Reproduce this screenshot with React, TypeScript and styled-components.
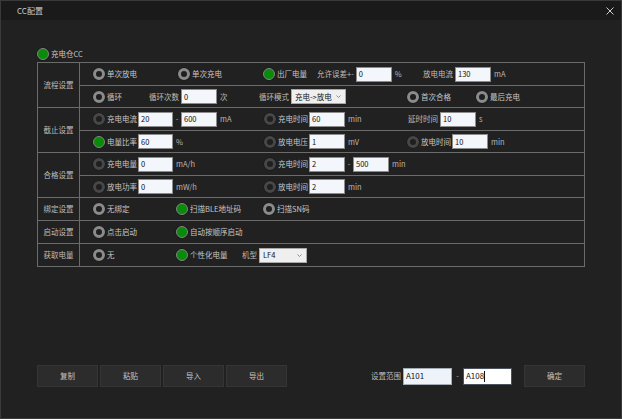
import React from 'react';
import styled, { createGlobalStyle } from 'styled-components';

type RadioState = 'on' | 'off' | 'dis';

const GlobalStyle = createGlobalStyle`
  html, body { margin: 0; padding: 0; background: #202020; }
  body { font-family: "Noto Sans CJK SC", "Noto Sans", sans-serif; }
  * { box-sizing: border-box; }
`;

const Window = styled.div`
  width: 622px;
  height: 419px;
  border: 1px solid #3a3a3a;
  background: #212121;
  display: flex;
  flex-direction: column;
  color: #c4c4c4;
  font-size: 7.5px;
  line-height: 1;
`;

const TitleBar = styled.div`
  height: 19px;
  flex: none;
  background: #1a1a1a;
  display: flex;
  align-items: center;
  justify-content: space-between;
  padding: 0 7px 0 16px;
  font-size: 8px;
  color: #cacaca;
`;

const Body = styled.div`
  flex: 1;
  display: flex;
  flex-direction: column;
  padding: 27px 36px 31px 36px;
`;

const TopRow = styled.div`
  height: 13px;
  margin-bottom: 2px;
  display: flex;
  align-items: center;
`;

const Table = styled.div`
  border: 1px solid #6b6b6b;
`;

const Group = styled.div`
  display: grid;
  grid-template-columns: 42px 1fr;
  & + & {
    border-top: 1px solid #6b6b6b;
  }
`;

const GroupLabel = styled.div`
  border-right: 1px solid #6b6b6b;
  display: flex;
  align-items: center;
  justify-content: center;
  color: #bdbdbd;
`;

const SubRow = styled.div`
  height: 22px;
  display: flex;
  align-items: center;
  padding-left: 13px;
  & + & {
    border-top: 1px solid #6b6b6b;
  }
`;

const Cell = styled.div<{ $w?: number }>`
  flex: ${p => (p.$w ? 'none' : '1')};
  width: ${p => (p.$w ? `${p.$w}px` : 'auto')};
  display: flex;
  align-items: center;
  white-space: nowrap;
`;

const Radio = styled.span<{ $state: RadioState }>`
  width: 12px;
  height: 12px;
  flex: none;
  border-radius: 50%;
  margin-right: 2px;
  border: ${p => (p.$state === 'on' ? '1.5px solid' : '3px solid')};
  border-color: ${p => (p.$state === 'on' ? '#858585' : p.$state === 'dis' ? '#474747' : '#8b8b8b')};
  background: ${p => (p.$state === 'on' ? '#0a8a0a' : '#1f1f1f')};
  box-shadow: 0 0 0 0.5px #151515;
`;

const Text = styled.span`
  color: #c6c6c6;
  margin-right: 1px;
`;

const Label = styled.span`
  color: #bebebe;
  margin-right: 2px;
`;

const Unit = styled.span`
  color: #b8b8b8;
  margin-left: 3px;
`;

const Dash = styled.span`
  width: 8px;
  text-align: center;
  color: #b8b8b8;
`;

const Box = styled.div<{ $w?: number }>`
  width: ${p => p.$w ?? 36}px;
  height: 15px;
  background: #f3f6fb;
  border: 1px solid #8c8c8c;
  color: #111;
  padding-left: 2px;
  display: flex;
  align-items: center;
`;

const Select = styled.div<{ $w: number }>`
  width: ${p => p.$w}px;
  height: 15px;
  background: #efefef;
  border: 1px solid #a9a9a9;
  color: #111;
  padding: 0 4px 0 3px;
  display: flex;
  align-items: center;
  justify-content: space-between;
`;

const Footer = styled.div`
  margin-top: auto;
  display: flex;
  align-items: center;
  justify-content: space-between;
`;

const ButtonGroup = styled.div`
  display: flex;
  gap: 2px;
`;

const Button = styled.div`
  width: 61px;
  height: 22px;
  background: #2c2c2c;
  border: 1px solid #353535;
  color: #c4c4c4;
  display: flex;
  align-items: center;
  justify-content: center;
`;

const RangeGroup = styled.div`
  display: flex;
  align-items: center;
`;

const RangeBox = styled.div<{ $focus?: boolean }>`
  width: 49px;
  height: 17px;
  background: ${p => (p.$focus ? '#ffffff' : '#eef3fa')};
  border: 1px solid ${p => (p.$focus ? '#4a525c' : '#a3abb5')};
  color: #111;
  font-size: 8px;
  padding-left: 2px;
  display: flex;
  align-items: center;
`;

const Caret = styled.span`
  width: 1px;
  height: 11px;
  background: #111;
`;

const RangeDash = styled.span`
  width: 11px;
  text-align: center;
  color: #b5b5b5;
`;

const OkButton = styled(Button)`
  margin-left: 12px;
`;

function Close() {
  return (
    <svg width="8" height="8" viewBox="0 0 8 8">
      <path d="M0.5 0.5 L7.5 7.5 M7.5 0.5 L0.5 7.5" stroke="#cfcfcf" strokeWidth="1" />
    </svg>
  );
}

function Chevron() {
  return (
    <svg width="5" height="3" viewBox="0 0 5 3">
      <path d="M0.5 0.5 L2.5 2.5 L4.5 0.5" stroke="#777" strokeWidth="0.8" fill="none" />
    </svg>
  );
}

function Choice({ state = 'off', children }: { state?: RadioState; children: React.ReactNode }) {
  return (
    <>
      <Radio $state={state} />
      <Text>{children}</Text>
    </>
  );
}

export default function App() {
  return (
    <>
      <GlobalStyle />
      <Window>
        <TitleBar>
          <span>CC配置</span>
          <Close />
        </TitleBar>
        <Body>
          <TopRow>
            <Choice state="on">充电仓CC</Choice>
          </TopRow>
          <Table>
            <Group>
              <GroupLabel>流程设置</GroupLabel>
              <div>
                <SubRow>
                  <Cell $w={85}><Choice>单次放电</Choice></Cell>
                  <Cell $w={85}><Choice>单次充电</Choice></Cell>
                  <Cell $w={54}><Choice state="on">出厂电量</Choice></Cell>
                  <Cell $w={106}>
                    <Label>允许误差+-</Label>
                    <Box>0</Box>
                    <Unit>%</Unit>
                  </Cell>
                  <Cell>
                    <Label>放电电流</Label>
                    <Box>130</Box>
                    <Unit>mA</Unit>
                  </Cell>
                </SubRow>
                <SubRow>
                  <Cell $w={56}><Choice>循环</Choice></Cell>
                  <Cell $w={110}>
                    <Label>循环次数</Label>
                    <Box>0</Box>
                    <Unit>次</Unit>
                  </Cell>
                  <Cell $w={148}>
                    <Label>循环模式</Label>
                    <Select $w={55}>
                      <span>充电-&gt;放电</span>
                      <Chevron />
                    </Select>
                  </Cell>
                  <Cell $w={69}><Choice>首次合格</Choice></Cell>
                  <Cell><Choice>最后充电</Choice></Cell>
                </SubRow>
              </div>
            </Group>
            <Group>
              <GroupLabel>截止设置</GroupLabel>
              <div>
                <SubRow>
                  <Cell $w={171}>
                    <Choice state="dis">充电电流</Choice>
                    <Box $w={35}>20</Box>
                    <Dash>-</Dash>
                    <Box>600</Box>
                    <Unit>mA</Unit>
                  </Cell>
                  <Cell $w={144}>
                    <Choice state="dis">充电时间</Choice>
                    <Box>60</Box>
                    <Unit>min</Unit>
                  </Cell>
                  <Cell>
                    <Label>延时时间</Label>
                    <Box>10</Box>
                    <Unit>s</Unit>
                  </Cell>
                </SubRow>
                <SubRow>
                  <Cell $w={171}>
                    <Choice state="on">电量比率</Choice>
                    <Box $w={35}>60</Box>
                    <Unit>%</Unit>
                  </Cell>
                  <Cell $w={143}>
                    <Choice state="dis">放电电压</Choice>
                    <Box>1</Box>
                    <Unit>mV</Unit>
                  </Cell>
                  <Cell>
                    <Choice state="dis">放电时间</Choice>
                    <Box>10</Box>
                    <Unit>min</Unit>
                  </Cell>
                </SubRow>
              </div>
            </Group>
            <Group>
              <GroupLabel>合格设置</GroupLabel>
              <div>
                <SubRow>
                  <Cell $w={171}>
                    <Choice state="dis">充电电量</Choice>
                    <Box $w={35}>0</Box>
                    <Unit>mA/h</Unit>
                  </Cell>
                  <Cell>
                    <Choice state="dis">充电时间</Choice>
                    <Box>2</Box>
                    <Dash>-</Dash>
                    <Box>500</Box>
                    <Unit>min</Unit>
                  </Cell>
                </SubRow>
                <SubRow>
                  <Cell $w={171}>
                    <Choice state="dis">放电功率</Choice>
                    <Box $w={35}>0</Box>
                    <Unit>mW/h</Unit>
                  </Cell>
                  <Cell>
                    <Choice state="dis">放电时间</Choice>
                    <Box>2</Box>
                    <Unit>min</Unit>
                  </Cell>
                </SubRow>
              </div>
            </Group>
            <Group>
              <GroupLabel>绑定设置</GroupLabel>
              <div>
                <SubRow>
                  <Cell $w={83}><Choice>无绑定</Choice></Cell>
                  <Cell $w={87}><Choice state="on">扫描BLE地址码</Choice></Cell>
                  <Cell><Choice>扫描SN码</Choice></Cell>
                </SubRow>
              </div>
            </Group>
            <Group>
              <GroupLabel>启动设置</GroupLabel>
              <div>
                <SubRow>
                  <Cell $w={83}><Choice>点击启动</Choice></Cell>
                  <Cell><Choice state="on">自动按顺序启动</Choice></Cell>
                </SubRow>
              </div>
            </Group>
            <Group>
              <GroupLabel>获取电量</GroupLabel>
              <div>
                <SubRow>
                  <Cell $w={83}><Choice>无</Choice></Cell>
                  <Cell $w={66}><Choice state="on">个性化电量</Choice></Cell>
                  <Cell>
                    <Label>机型</Label>
                    <Select $w={48}>
                      <span>LF4</span>
                      <Chevron />
                    </Select>
                  </Cell>
                </SubRow>
              </div>
            </Group>
          </Table>
          <Footer>
            <ButtonGroup>
              <Button>复制</Button>
              <Button>粘贴</Button>
              <Button>导入</Button>
              <Button>导出</Button>
            </ButtonGroup>
            <RangeGroup>
              <Label>设置范围</Label>
              <RangeBox>A101</RangeBox>
              <RangeDash>-</RangeDash>
              <RangeBox $focus>
                A108
                <Caret />
              </RangeBox>
              <OkButton>确定</OkButton>
            </RangeGroup>
          </Footer>
        </Body>
      </Window>
    </>
  );
}
